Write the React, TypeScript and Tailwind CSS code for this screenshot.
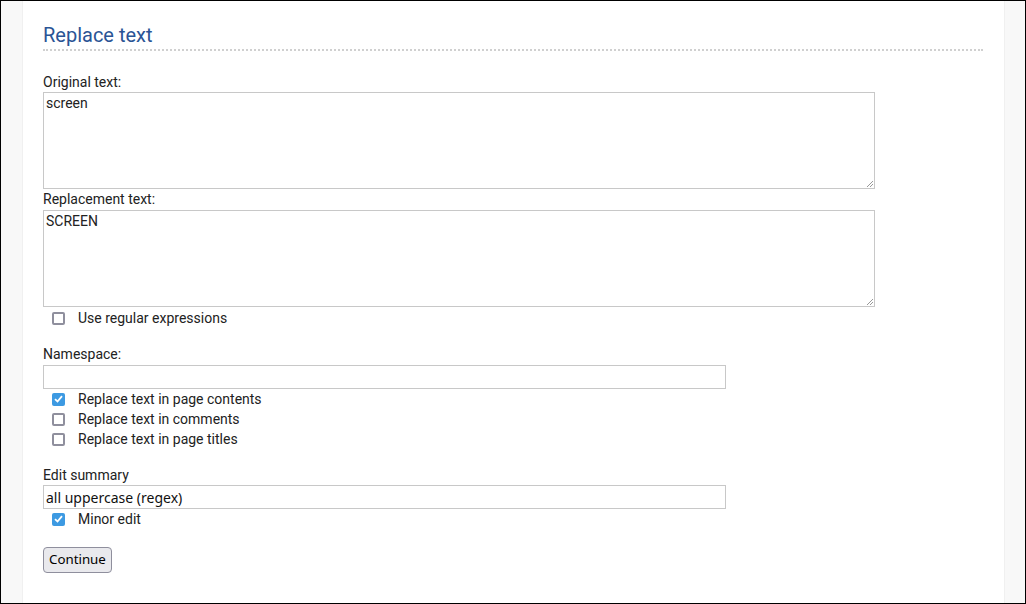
import React from "react";

function Check({
  checked,
  label,
  tall,
}: {
  checked?: boolean;
  label: string;
  tall?: boolean;
}) {
  return (
    <label className={`flex items-center ${tall ? "h-[22px]" : "h-5"}`}>
      <span className="ml-[9px] flex h-[13px] w-[13px] items-center justify-center">
        {checked ? (
          <span className="flex h-[13px] w-[13px] items-center justify-center rounded-[2px] bg-[#3d9ae2]">
            <svg width="9" height="8" viewBox="0 0 9 8">
              <path
                d="M1 4.2 L3.5 6.5 L8 1.2"
                fill="none"
                stroke="white"
                strokeWidth="1.8"
              />
            </svg>
          </span>
        ) : (
          <span className="h-[13px] w-[13px] rounded-[2px] border-2 border-[#8f8f9d] bg-white" />
        )}
      </span>
      <span className="ml-[13px] text-[14px] text-[#222]">{label}</span>
    </label>
  );
}

function Area({ value }: { value: string }) {
  return (
    <div className="relative h-[97px] w-[832px] border border-[#c8c8c8] bg-white px-[2px] text-[14px] leading-5 text-[#222]">
      {value}
      <svg
        className="absolute bottom-[1px] right-[1px]"
        width="6"
        height="6"
        viewBox="0 0 6 6"
      >
        <path d="M6 0 L0 6 M6 3 L3 6" stroke="#999" strokeWidth="1" />
      </svg>
    </div>
  );
}

function Input({ value }: { value?: string }) {
  return (
    <div
      className="flex h-6 w-[683px] items-center border border-[#c8c8c8] bg-white px-[2px] text-[14px] text-[#111]"
      style={{ fontFamily: "'Noto Sans', sans-serif" }}
    >
      {value}
    </div>
  );
}

export default function App() {
  return (
    <div
      className="flex h-[604px] w-[1026px] border border-black bg-[#f8f8f8]"
      style={{ fontFamily: "Roboto, 'Liberation Sans', sans-serif" }}
    >
      <div className="ml-[21px] mr-[20px] flex flex-1 flex-col border-x border-[#f0f0f0] bg-white pl-[20px] pr-[21px]">
        <h2 className="mt-[22px] border-b-2 border-dotted border-[#d0d0d0] pb-[2px] text-[20px] leading-6 text-[#2a5495]">
          Replace text
        </h2>
        <div className="mt-[21px] h-5 text-[14px] leading-5 text-[#222]">
          Original text:
        </div>
        <Area value="screen" />
        <div className="h-[21px] text-[14px] leading-5 text-[#222]">
          Replacement text:
        </div>
        <Area value="SCREEN" />
        <Check tall label="Use regular expressions" />
        <div className="mt-[15px] h-[21px] text-[14px] leading-5 text-[#222]">
          Namespace:
        </div>
        <Input />
        <Check checked label="Replace text in page contents" />
        <Check label="Replace text in comments" />
        <Check label="Replace text in page titles" />
        <div className="mt-[16px] h-5 text-[14px] leading-5 text-[#222]">
          Edit summary
        </div>
        <Input value="all uppercase (regex)" />
        <Check checked label="Minor edit" />
        <div className="mt-[18px]">
          <button
            className="h-[26px] rounded-[4px] border border-[#8f8f9d] bg-[#e9e9ed] px-[5px] text-[13.3px] text-black"
            style={{ fontFamily: "'Noto Sans', sans-serif" }}
          >
            Continue
          </button>
        </div>
      </div>
    </div>
  );
}
